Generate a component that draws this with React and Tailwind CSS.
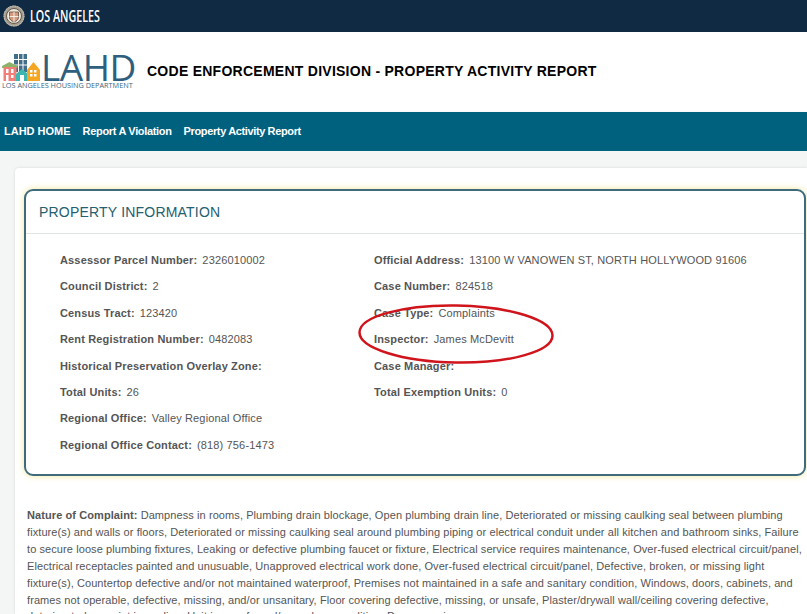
import React from 'react';

const sans = { fontFamily: '"Liberation Sans", Arial, sans-serif' };
const openSans = { fontFamily: '"Open Sans", sans-serif' };

const leftRows = [
  ['Assessor Parcel Number:', '2326010002'],
  ['Council District:', '2'],
  ['Census Tract:', '123420'],
  ['Rent Registration Number:', '0482083'],
  ['Historical Preservation Overlay Zone:', ''],
  ['Total Units:', '26'],
  ['Regional Office:', 'Valley Regional Office'],
  ['Regional Office Contact:', '(818) 756-1473'],
];

const rightRows = [
  ['Official Address:', '13100 W VANOWEN ST, NORTH HOLLYWOOD 91606'],
  ['Case Number:', '824518'],
  ['Case Type:', 'Complaints'],
  ['Inspector:', 'James McDevitt'],
  ['Case Manager:', ''],
  ['Total Exemption Units:', '0'],
];

const Seal = () => (
  <svg width="22" height="22" viewBox="0 0 22 22">
    <circle cx="11" cy="11" r="10.500" fill="#a39d92" />
    <circle cx="11" cy="11" r="10" fill="none" stroke="#d8d3c8" strokeWidth=".8" strokeDasharray="1.500 1" />
    <circle cx="11" cy="11" r="7.500" fill="#efe9da" stroke="#62564c" strokeWidth="1" />
    <path d="M6.500 7h9v5.500c0 2.200-2.200 3.600-4.500 4.500-2.300-.9-4.500-2.300-4.500-4.500z" fill="#d19a7f" stroke="#5c4a40" strokeWidth=".8" />
    <path d="M11 7v10M6.500 11.500h9" stroke="#f3efe6" strokeWidth="1" />
  </svg>
);

const Houses = () => (
  <svg width="38" height="27" viewBox="0 0 38 27" className="shrink-0">
    <rect x="12" y="0" width="13" height="18" fill="#3f6f8a" />
    <path d="M16.500 0v18M21 0v18M12 5.500h13M12 11h13" stroke="#fff" strokeWidth="1" />
    <path d="M0 12l7.500-4 8 4v2H0z" fill="#8cb369" />
    <rect x="1.500" y="13" width="13" height="14" fill="#ef7f78" />
    <path d="M4 15h2.500v4H4zM9 15h2.500v4H9zM4 21h2.500v6H4zM9 21h2.500v3H9z" fill="#fff" />
    <path d="M14 20l6-5 6 5v7H14z" fill="#3fb5b0" />
    <rect x="18" y="21" width="4" height="6" fill="#fff" />
    <path d="M25 16l6.500-8 6.500 8v11H25z" fill="#f5a623" />
    <path d="M28 16h2.500v2.500H28zM32 16h2.500v2.500H32zM28 20h2.500v2.500H28zM32 20h2.500v2.500H32z" fill="#fff" />
  </svg>
);

const InfoRow = ({ label, value }) => (
  <div className="h-[26.4px] flex items-center text-[11px] text-[#555] tracking-[0.15px] whitespace-nowrap">
    <span className="font-bold">{label}</span>
    {value && <span className="ml-[5px]">{value}</span>}
  </div>
);

export default function App() {
  return (
    <div className="relative w-[807px] h-[614px] overflow-hidden bg-white" style={sans}>
      {/* City bar */}
      <div className="h-8 bg-[#0f2a42] flex items-center pl-[3px]">
        <Seal />
        <span
          className="ml-[5px] text-white font-semibold text-[17px] origin-left scale-x-[0.63] whitespace-nowrap"
          style={openSans}
        >
          LOS ANGELES
        </span>
      </div>

      {/* Logo and title */}
      <div className="h-20 flex items-center">
        <div className="w-[147px] pl-[2px] self-start pt-[22px] shrink-0">
          <div className="flex items-start h-[27px]">
            <Houses />
            <span className="text-[#2e5f7e] text-[37px] leading-[27px] ml-[1px] -mt-[1px] tracking-[-0.5px]" style={openSans}>
              LAHD
            </span>
          </div>
          <div className="text-[#3d6580] text-[7.3px] leading-[8px] whitespace-nowrap" style={openSans}>
            LOS ANGELES HOUSING DEPARTMENT
          </div>
        </div>
        <div className="text-[14px] font-bold text-black tracking-[0.26px] -mt-[2px] whitespace-nowrap">
          CODE ENFORCEMENT DIVISION - PROPERTY ACTIVITY REPORT
        </div>
      </div>

      {/* Nav */}
      <nav className="h-[39px] bg-[#00617f] flex items-center gap-3 pl-1 text-white text-[11px] font-bold shadow-[0_2px_4px_rgba(0,0,0,0.2)]">
        <a href="#">LAHD HOME</a>
        <a href="#" className="tracking-[-0.33px]">Report A Violation</a>
        <a href="#" className="tracking-[-0.37px]">Property Activity Report</a>
      </nav>

      {/* Body */}
      <div className="bg-[#f4f5f5] pt-[17px] pl-[15px] h-[463px]">
        <div className="bg-white h-full rounded-tl-[4px] shadow-[0_0_3px_rgba(0,0,0,0.12)] pt-[21px] pl-[9px]">
          <div className="w-[782px] h-[287px] rounded-[9px] border-2 border-[#3f6b7d] shadow-[0_0_6px_rgba(240,228,140,0.9)]">
            <div className="h-[43px] border-b border-[#dfe3e3] pl-[13px] flex items-center text-[14px] text-[#24606f] tracking-[0.2px]">
              PROPERTY INFORMATION
            </div>
            <div className="grid grid-cols-[314px_1fr] pl-[34px] pt-[13px]">
              <div>
                {leftRows.map(([label, value]) => (
                  <InfoRow key={label} label={label} value={value} />
                ))}
              </div>
              <div>
                {rightRows.map(([label, value]) => (
                  <InfoRow key={label} label={label} value={value} />
                ))}
              </div>
            </div>
          </div>

          <p className="w-[776px] ml-[3px] mt-[31px] text-[11px] leading-[16.9px] text-[#555] tracking-[0.085px]">
            <b>Nature of Complaint:</b> Dampness in rooms, Plumbing drain blockage, Open plumbing drain line, Deteriorated or missing caulking seal between plumbing fixture(s) and walls or floors, Deteriorated or missing caulking seal around plumbing piping or electrical conduit under all kitchen and bathroom sinks, Failure to secure loose plumbing fixtures, Leaking or defective plumbing faucet or fixture, Electrical service requires maintenance, Over-fused electrical circuit/panel, Electrical receptacles painted and unusuable, Unapproved electrical work done, Over-fused electrical circuit/panel, Defective, broken, or missing light fixture(s), Countertop defective and/or not maintained waterproof, Premises not maintained in a safe and sanitary condition, Windows, doors, cabinets, and frames not operable, defective, missing, and/or unsanitary, Floor covering defective, missing, or unsafe, Plaster/drywall wall/ceiling covering defective, deteriorated, or paint is peeling, Unit in unsafe and/or unclean condition, Dampness in rooms.
          </p>
        </div>
      </div>

      {/* Hand-drawn red circle over the inspector row */}
      <svg className="absolute left-[350px] top-[298px] pointer-events-none" width="215" height="72" viewBox="0 0 215 72">
        <ellipse cx="106" cy="36" rx="96.500" ry="28.500" fill="none" stroke="#d0141c" strokeWidth="2.500" transform="rotate(1 106 36)" />
      </svg>
    </div>
  );
}
